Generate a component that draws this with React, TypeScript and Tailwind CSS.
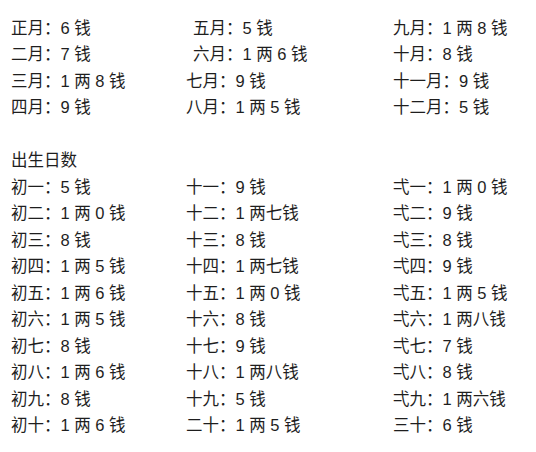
type Cell = { text: string; indent?: boolean };

const months: Cell[][] = [
  [{ text: "正月：6 钱" }, { text: "五月：5 钱", indent: true }, { text: "九月：1 两 8 钱" }],
  [{ text: "二月：7 钱" }, { text: "六月：1 两 6 钱", indent: true }, { text: "十月：8 钱" }],
  [{ text: "三月：1 两 8 钱" }, { text: "七月：9 钱" }, { text: "十一月：9 钱" }],
  [{ text: "四月：9 钱" }, { text: "八月：1 两 5 钱" }, { text: "十二月：5 钱" }],
];

const days: Cell[][] = [
  [{ text: "初一：5 钱" }, { text: "十一：9 钱" }, { text: "弌一：1 两 0 钱" }],
  [{ text: "初二：1 两 0 钱" }, { text: "十二：1 两七钱" }, { text: "弌二：9 钱" }],
  [{ text: "初三：8 钱" }, { text: "十三：8 钱" }, { text: "弌三：8 钱" }],
  [{ text: "初四：1 两 5 钱" }, { text: "十四：1 两七钱" }, { text: "弌四：9 钱" }],
  [{ text: "初五：1 两 6 钱" }, { text: "十五：1 两 0 钱" }, { text: "弌五：1 两 5 钱" }],
  [{ text: "初六：1 两 5 钱" }, { text: "十六：8 钱" }, { text: "弌六：1 两八钱" }],
  [{ text: "初七：8 钱" }, { text: "十七：9 钱" }, { text: "弌七：7 钱" }],
  [{ text: "初八：1 两 6 钱" }, { text: "十八：1 两八钱" }, { text: "弌八：8 钱" }],
  [{ text: "初九：8 钱" }, { text: "十九：5 钱" }, { text: "弌九：1 两六钱" }],
  [{ text: "初十：1 两 6 钱" }, { text: "二十：1 两 5 钱" }, { text: "三十：6 钱" }],
];

function Row({ cells }: { cells: Cell[] }) {
  return (
    <div className="flex h-[26.5px] items-center whitespace-pre">
      <div className="w-[175px]">{cells[0].text}</div>
      <div className={cells[1].indent ? "w-[207px] pl-[7px]" : "w-[207px]"}>{cells[1].text}</div>
      <div>{cells[2].text}</div>
    </div>
  );
}

export default function App() {
  return (
    <div
      className="w-[536px] h-[452px] bg-white text-[#1e1e1e] text-[16.5px] pl-[11px] pt-[15px] overflow-hidden"
      style={{ fontFamily: '"Liberation Sans", "Noto Sans CJK SC", sans-serif' }}
    >
      {months.map((r, i) => (
        <Row key={i} cells={r} />
      ))}
      <div className="h-[26.5px]" />
      <div className="flex h-[26.5px] items-center">出生日数</div>
      {days.map((r, i) => (
        <Row key={i} cells={r} />
      ))}
    </div>
  );
}
